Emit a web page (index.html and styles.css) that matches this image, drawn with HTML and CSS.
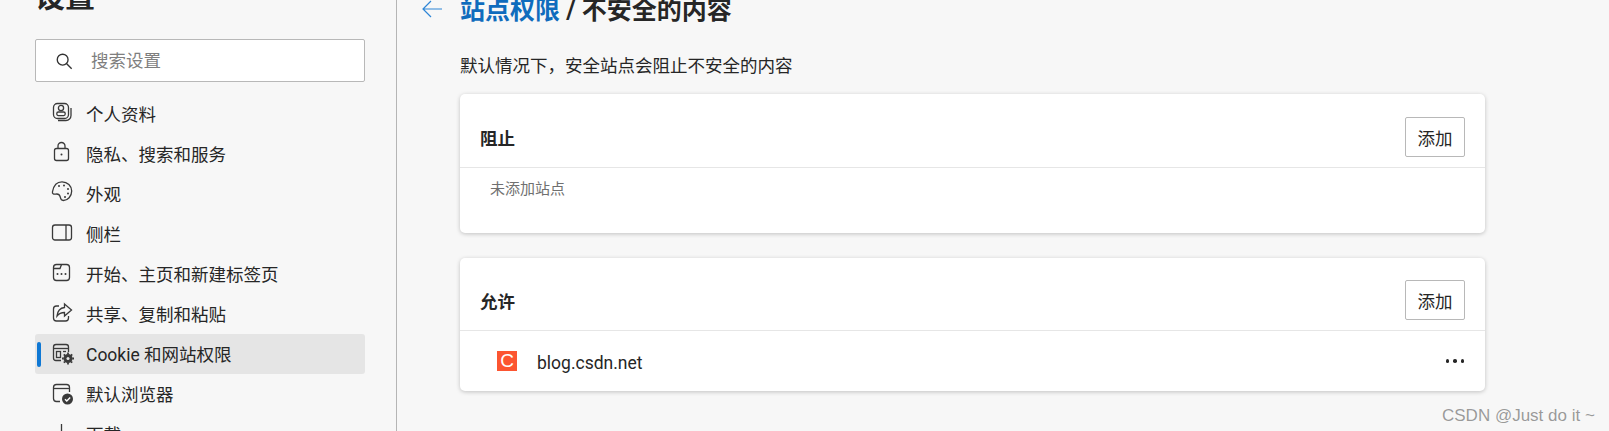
FILE: index.html
```html
<!DOCTYPE html>
<html lang="zh-CN">
<head>
    <meta charset="UTF-8">
    <title>设置 - 不安全的内容</title>
    <link rel="stylesheet" href="styles.css">
</head>
<body>
    <aside class="sidebar">
        <h1 class="sidebar-title">设置</h1>
        <div class="search">
            <svg class="search-icon" viewBox="0 0 20 20"><circle cx="8.5" cy="8.5" r="6"/><path d="M13 13l5.5 5.5"/></svg>
            <span class="search-text">搜索设置</span>
        </div>
        <nav class="nav">
            <a class="nav-item">
                <svg class="nav-icon" viewBox="0 0 24 24"><rect x="3.5" y="2.5" width="15" height="15" rx="4"/><path d="M21 7v7.5a5 5 0 0 1-5 5H8"/><circle cx="11" cy="7" r="2.6"/><rect x="6.8" y="11" width="8.4" height="3.6" rx="1.5"/></svg>
                <span>个人资料</span>
            </a>
            <a class="nav-item">
                <svg class="nav-icon" viewBox="0 0 24 24"><rect x="4.5" y="7.5" width="14" height="12" rx="2"/><path d="M8 7.500V5a3.500 3.500 0 0 1 7 0v2.500"/><circle class="dot" cx="11.500" cy="13.500" r="1"/></svg>
                <span>隐私、搜索和服务</span>
            </a>
            <a class="nav-item">
                <svg class="nav-icon" viewBox="0 0 24 24"><path d="M12 .8c5.500 0 9.700 4.200 9.700 9.300 0 5.300-4 9.400-8.400 9.400-2.800 0-2.700-2.200-3.200-4-.6-2-2.400-2.800-4.500-2.400-2.100.4-3.600-.3-3.100-2.500C3.500 5.100 6.600.8 12 .8z"/><circle class="dot" cx="9" cy="5" r="1"/><circle class="dot" cx="14" cy="4.500" r="1"/><circle class="dot" cx="18" cy="8" r="1"/><circle class="dot" cx="18" cy="12.500" r="1"/><circle class="dot" cx="15" cy="16" r="1"/></svg>
                <span>外观</span>
            </a>
            <a class="nav-item">
                <svg class="nav-icon" viewBox="0 0 24 24"><rect x="2.500" y="4" width="19" height="15" rx="2.500"/><path d="M16 4v15"/></svg>
                <span>侧栏</span>
            </a>
            <a class="nav-item">
                <svg class="nav-icon" viewBox="0 0 24 24"><rect x="3.500" y="3.500" width="16" height="16" rx="3"/><path d="M3.500 7.500h6.500l1.500-4"/><circle class="dot" cx="7.500" cy="13" r="1"/><circle class="dot" cx="11.500" cy="13" r="1"/><circle class="dot" cx="15.500" cy="13" r="1"/></svg>
                <span>开始、主页和新建标签页</span>
            </a>
            <a class="nav-item">
                <svg class="nav-icon" viewBox="0 0 24 24"><path d="M9 5H6.500a3 3 0 0 0-3 3v9a3 3 0 0 0 3 3h9a3 3 0 0 0 3-3v-2"/><path d="M14.500 3l7 6-7 6v-3.500c-3.500 0-5.500 1-7.500 3.500.5-4.500 3-8 7.500-8.500z"/></svg>
                <span>共享、复制和粘贴</span>
            </a>
            <a class="nav-item active">
                <svg class="nav-icon" viewBox="0 0 24 24"><path d="M11 19.500H6a2.500 2.500 0 0 1-2.500-2.500V6A2.500 2.500 0 0 1 6 3.500h10A2.500 2.500 0 0 1 18.500 6v5"/><path d="M3.500 7.500h15"/><rect x="6.500" y="10.500" width="4" height="6"/><path d="M13 10.500h3"/><circle class="badge" cx="18" cy="17.500" r="4.500"/><circle class="badge-hole" cx="18" cy="17.500" r="1.500"/><path class="gear" d="M18 11.500v12M12 17.500h12M13.800 13.300l8.400 8.400M22.200 13.300l-8.400 8.400"/></svg>
                <span>Cookie 和网站权限</span>
            </a>
            <a class="nav-item">
                <svg class="nav-icon" viewBox="0 0 24 24"><path d="M10 20.500H6.500a3 3 0 0 1-3-3V6.500a3 3 0 0 1 3-3h10a3 3 0 0 1 3 3V11"/><path d="M3.500 7.500h16"/><circle class="badge" cx="17.500" cy="18" r="5.500"/><path class="check" d="M15 18.200l1.800 1.800 3.400-3.600"/></svg>
                <span>默认浏览器</span>
            </a>
            <a class="nav-item">
                <svg class="nav-icon" viewBox="0 0 24 24"><path d="M11.500 3v13M6 11l5.500 5.500L17 11M4 20.500h15"/></svg>
                <span>下载</span>
            </a>
        </nav>
    </aside>

    <main class="content">
        <div class="page-head">
            <svg class="back" viewBox="0 0 20 18"><path d="M9 1L1 9l8 8M1 9h19"/></svg>
            <h2 class="page-title"><a class="crumb">站点权限</a> / 不安全的内容</h2>
        </div>
        <div class="page-body">
            <p class="page-desc">默认情况下，安全站点会阻止不安全的内容</p>

            <section class="card card-block">
                <div class="card-head">
                    <h3>阻止</h3>
                    <button class="add-btn">添加</button>
                </div>
                <p class="empty">未添加站点</p>
            </section>

            <section class="card">
                <div class="card-head">
                    <h3>允许</h3>
                    <button class="add-btn">添加</button>
                </div>
                <div class="site-row">
                    <span class="favicon">C</span>
                    <span class="site-name">blog.csdn.net</span>
                    <span class="more"><i></i><i></i><i></i></span>
                </div>
            </section>
        </div>
    </main>

    <div class="watermark">CSDN @Just do it ~</div>
</body>
</html>
```

FILE: styles.css
```css
body {
    font-family: Roboto, "Noto Sans CJK SC", sans-serif;
    font-size: 17.5px;
    margin: 0;
    height: 431px;
    overflow: hidden;
    display: flex;
    background: #f7f7f7;
    color: #262626;
}

.sidebar {
    flex: none;
    width: 397px;
    height: 431px;
    padding-left: 35px;
    box-sizing: border-box;
    border-right: 1px solid #b5b5b5;
}

.sidebar-title {
    font-size: 30px;
    line-height: 40px;
    margin: -23px 0 22px;
}

.search {
    width: 330px;
    height: 43px;
    box-sizing: border-box;
    display: flex;
    align-items: center;
    background: #fff;
    border: 1px solid #b8b8b8;
    border-radius: 2px;
    padding-left: 19px;
}

.search-icon {
    width: 18px;
    height: 18px;
    fill: none;
    stroke: #333;
    stroke-width: 1.500;
}

.search-text {
    margin-left: 18px;
    color: #7f7f7f;
    margin-top: -3px;
}

.nav {
    margin-top: 12px;
    width: 330px;
}

.nav-item {
    position: relative;
    height: 40px;
    display: flex;
    align-items: center;
    padding-left: 15px;
    border-radius: 3px;
}

.nav-item span {
    margin-top: -1px;
}

.nav-item.active {
    background: #e5e5e5;
}

.nav-item.active::before {
    content: "";
    position: absolute;
    left: 2px;
    top: 8px;
    width: 4px;
    height: 25px;
    border-radius: 2px;
    background: #0f78d4;
}

.nav-icon {
    flex: none;
    width: 24px;
    height: 24px;
    margin-right: 12px;
    margin-top: -2px;
    fill: none;
    stroke: #3a3a3a;
    stroke-width: 1.300;
}

.nav-icon .dot {
    fill: #3a3a3a;
    stroke: none;
}

.nav-icon .badge {
    fill: #3a3a3a;
    stroke: none;
}

.nav-icon .badge-hole {
    fill: #e5e5e5;
    stroke: none;
}

.nav-icon .gear {
    stroke-width: 1.800;
    stroke-dasharray: 1.800 8.400;
}

.nav-icon .check {
    stroke: #fff;
    stroke-width: 1.400;
}

.content {
    flex: 1;
    padding-left: 25px;
}

.page-head {
    display: flex;
    align-items: center;
    height: 36px;
    margin-top: -7px;
}

.back {
    width: 20px;
    height: 18px;
    margin-right: 18px;
    margin-top: -4px;
    fill: none;
    stroke: #2f86d6;
    stroke-width: 1.200;
}

.page-title {
    font-size: 25px;
    line-height: 36px;
    margin: 0;
}

.crumb {
    color: #0f6cbd;
}

.page-body {
    width: 1025px;
    margin-left: 38px;
}

.page-desc {
    margin: 25px 0 16px;
    line-height: 24px;
}

.card {
    background: #fff;
    border-radius: 5px;
    box-shadow: 0 1px 4px rgba(0, 0, 0, 0.22);
}

.card-block {
    height: 139px;
    margin-bottom: 25px;
}

.card-head {
    height: 73px;
    box-sizing: border-box;
    display: flex;
    align-items: flex-end;
    justify-content: space-between;
    padding: 0 20px 10px;
    border-bottom: 1px solid #e6e6e6;
}

.card-block .card-head {
    height: 74px;
}

.card-head h3 {
    font-size: 17.500px;
    line-height: 44px;
    margin: 0;
    height: 40px;
}

.add-btn {
    width: 60px;
    height: 40px;
    padding: 0;
    background: #fff;
    border: 1px solid #b8b8b8;
    border-radius: 2px;
    font-family: inherit;
    font-size: 17.500px;
    color: #262626;
}

.empty {
    font-size: 15px;
    line-height: 20px;
    margin: 11px 0 0 30px;
    color: #707070;
}

.site-row {
    height: 60px;
    display: flex;
    align-items: center;
    padding: 0 21px 0 37px;
}

.favicon {
    flex: none;
    width: 20px;
    height: 20px;
    background: #fc5531;
    color: #fff;
    font-family: "Liberation Sans", sans-serif;
    font-size: 19px;
    line-height: 20px;
    text-align: center;
}

.site-name {
    flex: 1;
    margin: 4px 0 0 20px;
}

.more {
    display: flex;
    gap: 4px;
}

.more i {
    width: 3.500px;
    height: 3.500px;
    border-radius: 50%;
    background: #262626;
}

.watermark {
    position: absolute;
    left: 1442px;
    top: 406px;
    font-family: "Liberation Sans", sans-serif;
    font-size: 17px;
    line-height: 20px;
    color: rgba(90, 90, 90, 0.6);
}
```
